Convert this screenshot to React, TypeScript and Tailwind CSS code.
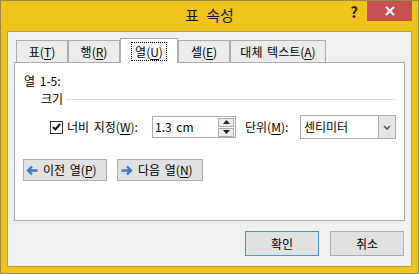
import React from "react";

const U = ({ c }: { c: string }) => <span className="underline underline-offset-2">{c}</span>;

function Tab({ label, k, w, active }: { label: string; k: string; w: string; active?: boolean }) {
  if (active) {
    return (
      <div className={`${w} h-[25px] -mb-px relative z-10 bg-white border border-b-0 border-[#ADADAD] flex items-start justify-center pt-[3px]`}>
        <div className="border border-dotted border-black px-[3px] h-[19px] flex items-center leading-none">
          {label}(<U c={k} />)
        </div>
      </div>
    );
  }
  return (
    <div className={`${w} h-[22px] bg-[#EBEBEB] border border-b-0 border-[#ADADAD] flex items-center justify-center leading-none`}>
      {label}(<U c={k} />)
    </div>
  );
}

const ArrowLeft = () => (
  <svg width="12" height="11" viewBox="0 0 12 11">
    <path d="M11.5 5.5H2.5M6 1.5L2 5.5L6 9.5" fill="none" stroke="#3D7CC4" strokeWidth="2.4" />
  </svg>
);
const ArrowRight = () => (
  <svg width="12" height="11" viewBox="0 0 12 11">
    <path d="M0.5 5.5H9.5M6 1.5L10 5.5L6 9.5" fill="none" stroke="#3D7CC4" strokeWidth="2.4" />
  </svg>
);

export default function App() {
  return (
    <div
      className="w-[419px] h-[274px] border border-[#9E8B43] bg-[#EFC31A] flex flex-col text-[12px] text-black [word-spacing:2px]"
      style={{ fontFamily: "'Noto Sans CJK KR', 'Noto Sans', sans-serif" }}
    >
      {/* title bar */}
      <div className="h-[30px] flex shrink-0">
        <div className="w-[77px]" />
        <div className="flex-1 flex items-center justify-center text-[15px] text-[#1a1a1a] pb-[1px] [word-spacing:4px]">표 속성</div>
        <div className="w-[77px] flex items-start">
          <div className="w-[26px] h-[22px] flex items-center justify-center text-[15px] font-bold text-[#222]">?</div>
          <div className="w-[45px] h-[20px] bg-[#C75050] flex items-center justify-center">
            <svg width="10" height="10" viewBox="0 0 10 10">
              <path d="M1 1L9 9M9 1L1 9" stroke="white" strokeWidth="2" />
            </svg>
          </div>
        </div>
      </div>
      {/* body */}
      <div className="flex-1 px-[6px] pb-[6px] flex">
        <div className="flex-1 border border-[#B7A04E] bg-[#F0F0F0] pt-[6px] px-[6px] flex flex-col">
          <div className="h-[24px] flex items-end pl-[2px]">
            <Tab label="표" k="T" w="w-[52px]" />
            <Tab label="행" k="R" w="w-[52px]" />
            <Tab label="열" k="U" w="w-[58px]" active />
            <Tab label="셀" k="E" w="w-[52px]" />
            <Tab label="대체 텍스트" k="A" w="w-[96px]" />
          </div>
          <div className="h-[159px] border border-[#ADADAD] bg-white pl-[9px] pr-[8px] pt-[10px] flex flex-col">
            <div className="h-[16px] leading-[16px]">열 1-5:</div>
            <div className="mt-[2px] h-[16px] flex items-center pl-[17px]">
              <span className="leading-[16px]">크기</span>
              <div className="flex-1 h-px bg-[#DCDCDC] ml-[3px]" />
            </div>
            <div className="mt-[8px] h-[24px] flex items-center pl-[26px]">
              <div className="w-[13px] h-[13px] border border-[#333] bg-white flex items-center justify-center">
                <svg width="9" height="8" viewBox="0 0 9 8">
                  <path d="M1 4L3.5 6.5L8 1" fill="none" stroke="#111" strokeWidth="2" />
                </svg>
              </div>
              <span className="ml-[4px] w-[76px] whitespace-nowrap">
                너비 지정(<U c="W" />):
              </span>
              <div className="ml-[9px] w-[84px] h-[22px] border border-[#ABADB3] bg-white flex items-center pl-[2px] pr-[1px]">
                <span className="flex-1">1.3 cm</span>
                <div className="w-[16px] h-[19px] flex flex-col gap-[1px]">
                  <div className="flex-1 border border-[#ADADAD] bg-[#ECECEC] flex items-center justify-center">
                    <svg width="7" height="4" viewBox="0 0 7 4"><path d="M0 4L3.5 0L7 4Z" fill="#222" /></svg>
                  </div>
                  <div className="flex-1 border border-[#ADADAD] bg-[#ECECEC] flex items-center justify-center">
                    <svg width="7" height="4" viewBox="0 0 7 4"><path d="M0 0L3.5 4L7 0Z" fill="#222" /></svg>
                  </div>
                </div>
              </div>
              <span className="ml-[9px] whitespace-nowrap">
                단위(<U c="M" />):
              </span>
              <div className="ml-auto w-[96px] h-[24px] border border-[#ABADB3] bg-white flex items-stretch">
                <span className="flex-1 flex items-center pl-[3px]">센티미터</span>
                <div className="w-[17px] bg-[#E5E5E5] border-l border-[#ACACAC] flex items-center justify-center">
                  <svg width="8" height="5" viewBox="0 0 8 5">
                    <path d="M1 1L4 4L7 1" fill="none" stroke="#555" strokeWidth="1.6" />
                  </svg>
                </div>
              </div>
            </div>
            <div className="mt-[20px] -ml-[1px] flex gap-[10px]">
              <div className="w-[84px] h-[22px] border border-[#ADADAD] bg-[#E1E1E1] flex items-center pl-[2px] gap-[5px]">
                <ArrowLeft />
                <span>
                  이전 열(<U c="P" />)
                </span>
              </div>
              <div className="w-[86px] h-[22px] border border-[#ADADAD] bg-[#E1E1E1] flex items-center pl-[3px] gap-[5px]">
                <ArrowRight />
                <span>
                  다음 열(<U c="N" />)
                </span>
              </div>
            </div>
          </div>
          <div className="mt-[10px] flex justify-end gap-[11px] pr-[1px]">
            <div className="w-[74px] h-[25px] border border-[#3C9DEB] bg-[#E1E1E1] flex items-center justify-center">확인</div>
            <div className="w-[74px] h-[25px] border border-[#ADADAD] bg-[#E1E1E1] flex items-center justify-center">취소</div>
          </div>
        </div>
      </div>
    </div>
  );
}
